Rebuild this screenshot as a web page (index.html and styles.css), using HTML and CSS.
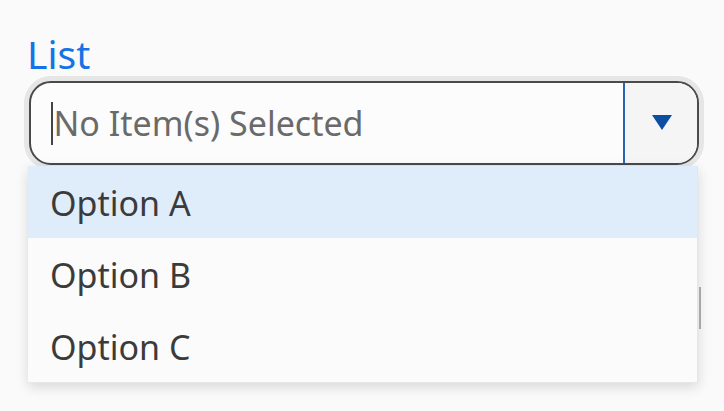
FILE: index.html
```html
<!DOCTYPE html>
<html lang="en">
<head>
<meta charset="utf-8">
<title>List</title>
<link rel="stylesheet" href="styles.css">
</head>
<body>
<div class="page">
  <div class="field">
    <div class="label">List</div>
    <div class="combo">
      <div class="input">
        <span class="caret"></span>
        <span class="placeholder">No Item(s) Selected</span>
      </div>
      <div class="toggle">
        <svg class="arrow" width="20" height="15" viewBox="0 0 20 15"><path d="M0 0 H20 L10 15 Z" fill="#0b4ea2"/></svg>
      </div>
    </div>
    <div class="listbox">
      <div class="option active">Option A</div>
      <div class="option">Option B</div>
      <div class="option">Option C</div>
    </div>
  </div>
</div>
</body>
</html>
```

FILE: styles.css
```css
html, body {
  margin: 0;
  padding: 0;
  background: #fafafa;
  min-height: 411px;
}

.page {
  padding: 34px 25px 30px 29px;
  font-family: "Noto Sans", "Open Sans", sans-serif;
}

.field {
  display: flex;
  flex-direction: column;
}

.label {
  font-size: 39px;
  line-height: 40px;
  color: #1473e6;
  margin-left: -2px;
}

.combo {
  margin-top: 7px;
  height: 84px;
  box-sizing: border-box;
  border: 2px solid #4a4a4a;
  border-radius: 22px;
  box-shadow: 0 0 0 5px #e6e6e6;
  display: flex;
  overflow: hidden;
  background: #fcfcfc;
}

.input {
  flex: 1;
  display: flex;
  align-items: center;
  padding-left: 20px;
}

.caret {
  width: 1.5px;
  height: 43px;
  background: #444;
  margin-right: 1px;
}

.placeholder {
  font-size: 34px;
  color: #6a6a6a;
}

.toggle {
  width: 72px;
  border-left: 2px solid #2b63b3;
  background: #f5f5f5;
  display: flex;
  align-items: center;
  justify-content: center;
}

.arrow {
  display: block;
  margin-left: 1px;
  margin-top: -2px;
}

.listbox {
  position: relative;
  z-index: 1;
  margin: 1px 0 0 -1px;
  width: 669px;
  background: #fbfbfb;
  border-right: 1px solid #e6e6e6;
  border-bottom: 1px solid #e8e8e8;
  box-shadow: 0 4px 12px rgba(0, 0, 0, 0.14);
}

.listbox::after {
  content: "";
  position: absolute;
  right: -4px;
  top: 121px;
  width: 2px;
  height: 42px;
  background: #a8a8a8;
}

.option {
  height: 72px;
  line-height: 72px;
  padding: 1px 0 0 22px;
  box-sizing: border-box;
  font-size: 34px;
  color: #3b3b3b;
}

.option.active {
  background: #dfedfb;
}
```
